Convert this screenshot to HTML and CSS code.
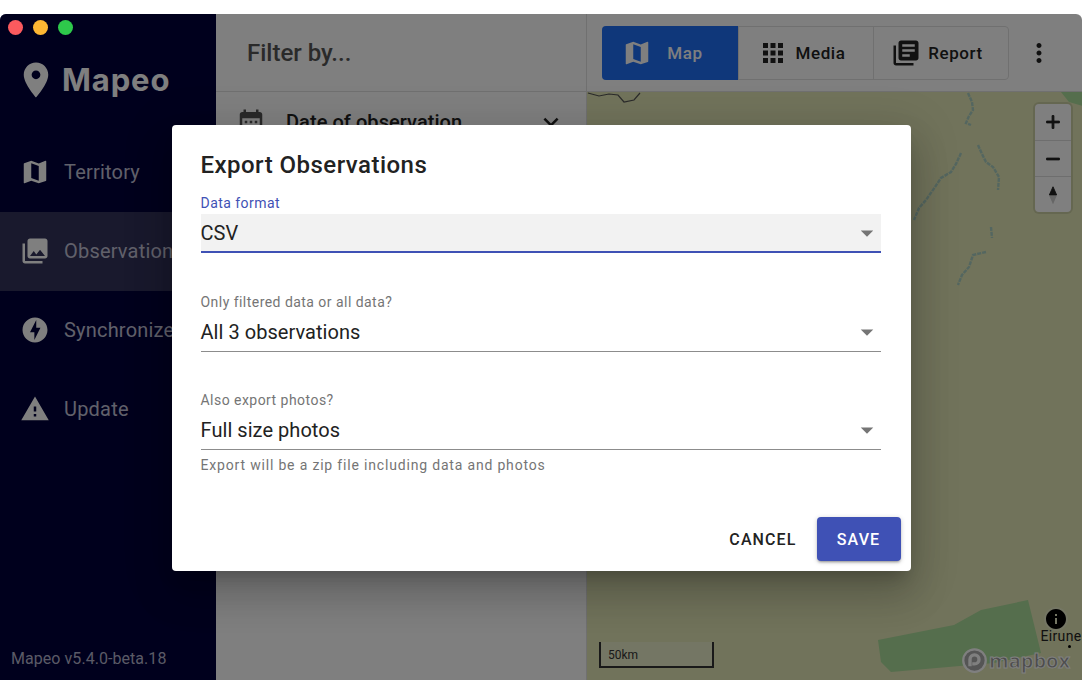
FILE: index.html
```html
<!DOCTYPE html>
<html lang="en">
<head>
    <meta charset="UTF-8">
    <meta name="viewport" content="width=device-width, initial-scale=1.0">
    <title>Mapeo - Export Observations</title>
    <link rel="stylesheet" href="styles.css">
</head>
<body>
    <div class="window">
        <div class="traffic-lights">
            <span class="light light-red"></span>
            <span class="light light-yellow"></span>
            <span class="light light-green"></span>
        </div>

        <aside class="sidebar">
            <div class="logo">
                <svg class="logo-pin" viewBox="0 0 24 24"><path d="M12 2C8.13 2 5 5.13 5 9c0 5.25 7 13 7 13s7-7.75 7-13c0-3.87-3.13-7-7-7zm0 9.5c-1.38 0-2.5-1.12-2.5-2.5s1.12-2.5 2.5-2.5 2.5 1.12 2.5 2.5-1.12 2.5-2.5 2.5z"/></svg>
                <span class="logo-text">Mapeo</span>
            </div>
            <nav class="nav">
                <div class="nav-item">
                    <svg class="icon" viewBox="0 0 24 24"><path d="M20.5 3l-.16.03L15 5.1 9 3 3.36 4.9c-.21.07-.36.25-.36.48V20.5c0 .28.22.5.5.5l.16-.03L9 18.9l6 2.1 5.64-1.9c.21-.07.36-.25.36-.48V3.5c0-.28-.22-.5-.5-.5zM15 19l-6-2.11V5l6 2.11V19z"/></svg>
                    <span>Territory</span>
                </div>
                <div class="nav-item nav-item-active">
                    <svg class="icon" viewBox="0 0 24 24"><path d="M22 16V4c0-1.1-.9-2-2-2H8c-1.1 0-2 .9-2 2v12c0 1.1.9 2 2 2h12c1.1 0 2-.9 2-2zm-11-4l2.03 2.71L16 11l4 5H8l3-4zM2 6v14c0 1.1.9 2 2 2h14v-2H4V6H2z"/></svg>
                    <span>Observations</span>
                </div>
                <div class="nav-item">
                    <svg class="icon" viewBox="0 0 24 24"><path d="M12 2.02c-5.51 0-9.98 4.47-9.98 9.98s4.47 9.98 9.98 9.98 9.98-4.47 9.98-9.98S17.51 2.02 12 2.02zM11.48 20v-6.26H8L13 4v6.26h3.35L11.48 20z"/></svg>
                    <span>Synchronize</span>
                </div>
                <div class="nav-item">
                    <svg class="icon" viewBox="0 0 24 24"><path d="M1 21h22L12 2 1 21zm12-3h-2v-2h2v2zm0-4h-2v-4h2v4z"/></svg>
                    <span>Update</span>
                </div>
            </nav>
            <div class="version">Mapeo v5.4.0-beta.18</div>
        </aside>

        <section class="filters">
            <header class="filters-header">Filter by...</header>
            <div class="filter-row">
                <svg class="icon filter-icon" viewBox="0 0 24 24"><path d="M9 11H7v2h2v-2zm4 0h-2v2h2v-2zm4 0h-2v2h2v-2zm2-7h-1V2h-2v2H8V2H6v2H5c-1.11 0-1.99.9-1.99 2L3 20c0 1.1.89 2 2 2h14c1.1 0 2-.9 2-2V6c0-1.1-.9-2-2-2zm0 16H5V9h14v11z"/></svg>
                <span class="filter-name">Date of observation</span>
                <svg class="icon filter-chevron" viewBox="0 0 24 24"><path d="M16.59 8.59L12 13.17 7.41 8.59 6 10l6 6 6-6z"/></svg>
            </div>
        </section>

        <main class="content">
            <div class="toolbar">
                <div class="toggle-group">
                    <div class="toggle toggle-active">
                        <svg class="icon" viewBox="0 0 24 24"><path d="M20.5 3l-.16.03L15 5.1 9 3 3.36 4.9c-.21.07-.36.25-.36.48V20.5c0 .28.22.5.5.5l.16-.03L9 18.9l6 2.1 5.64-1.9c.21-.07.36-.25.36-.48V3.5c0-.28-.22-.5-.5-.5zM15 19l-6-2.11V5l6 2.11V19z"/></svg>
                        <span>Map</span>
                    </div>
                    <div class="toggle">
                        <svg class="icon" viewBox="0 0 24 24"><path d="M4 8h4V4H4v4zm6 12h4v-4h-4v4zm-6 0h4v-4H4v4zm0-6h4v-4H4v4zm6 0h4v-4h-4v4zm6-10v4h4V4h-4zm-6 4h4V4h-4v4zm6 6h4v-4h-4v4zm0 6h4v-4h-4v4z"/></svg>
                        <span>Media</span>
                    </div>
                    <div class="toggle">
                        <svg class="icon" viewBox="0 0 24 24"><path d="M4 6H2v14c0 1.1.9 2 2 2h14v-2H4V6zm16-4H8c-1.1 0-2 .9-2 2v12c0 1.1.9 2 2 2h12c1.1 0 2-.9 2-2V4c0-1.1-.9-2-2-2zm-1 9H9V9h10v2zm-4 4H9v-2h6v2zm4-8H9V5h10v2z"/></svg>
                        <span>Report</span>
                    </div>
                </div>
                <svg class="icon more-icon" viewBox="0 0 24 24"><path d="M12 8c1.1 0 2-.9 2-2s-.9-2-2-2-2 .9-2 2 .9 2 2 2zm0 2c-1.1 0-2 .9-2 2s.9 2 2 2 2-.9 2-2-.9-2-2-2zm0 6c-1.1 0-2 .9-2 2s.9 2 2 2 2-.9 2-2-.9-2-2-2z"/></svg>
            </div>

            <div class="map">
                <!-- map features, coordinates are relative to the map's top left corner -->
                <svg class="map-features" viewBox="0 0 496 588">
                    <polygon class="map-park" points="291,548 367,533 394,518 441,508 454,561 407,571 304,580 294,570"/>
                    <polygon class="map-park" points="474,0 496,0 496,14 482,10"/>
                    <polyline class="map-road" points="1,1 12,4 22,2 31,3 37,10 47,8 53,1"/>
                    <polyline class="map-river" points="381,1 385,10 386,18 382,24 379,31 384,33"/>
                    <polyline class="map-river" points="391,53 395,62 399,70 406,75 412,85 411,98"/>
                    <polyline class="map-river" points="374,61 369,72 364,80 354,86 348,95 339,108 332,116 327,128"/>
                    <polyline class="map-river" points="404,135 405,146"/>
                    <polyline class="map-river" points="399,160 386,163 382,175 375,183 371,193"/>
                </svg>

                <div class="map-controls">
                    <div class="map-control">
                        <svg viewBox="0 0 24 24"><path d="M19 13h-6v6h-2v-6H5v-2h6V5h2v6h6v2z"/></svg>
                    </div>
                    <div class="map-control">
                        <svg viewBox="0 0 24 24"><path d="M19 13H5v-2h14v2z"/></svg>
                    </div>
                    <div class="map-control">
                        <svg viewBox="0 0 24 24"><path d="M12 3l4 9H8z"/><path class="compass-south" d="M12 22l-4-9h8z"/></svg>
                    </div>
                </div>

                <div class="map-scale">50km</div>

                <div class="map-place">
                    <svg class="map-info" viewBox="0 0 24 24"><path d="M12 2C6.48 2 2 6.48 2 12s4.48 10 10 10 10-4.48 10-10S17.52 2 12 2zm1 15h-2v-6h2v6zm0-8h-2V7h2v2z"/></svg>
                    <span class="map-place-name">Eirune</span>
                    <span class="map-place-dot"></span>
                </div>

                <div class="mapbox-logo">
                    <svg viewBox="0 0 24 24"><circle cx="12" cy="12" r="10"/><path class="mapbox-p" d="M8 17V11a4 4 0 1 1 4 4H10"/></svg>
                    <span>mapbox</span>
                </div>
            </div>
        </main>

        <div class="overlay">
            <div class="dialog">
                <h2 class="dialog-title">Export Observations</h2>

                <div class="field">
                    <label class="field-label field-label-focus">Data format</label>
                    <div class="select select-focus">
                        <span>CSV</span>
                        <svg class="select-arrow" viewBox="0 0 24 24"><path d="M7 10l5 5 5-5z"/></svg>
                    </div>
                </div>

                <div class="field">
                    <label class="field-label">Only filtered data or all data?</label>
                    <div class="select">
                        <span>All 3 observations</span>
                        <svg class="select-arrow" viewBox="0 0 24 24"><path d="M7 10l5 5 5-5z"/></svg>
                    </div>
                </div>

                <div class="field">
                    <label class="field-label">Also export photos?</label>
                    <div class="select">
                        <span>Full size photos</span>
                        <svg class="select-arrow" viewBox="0 0 24 24"><path d="M7 10l5 5 5-5z"/></svg>
                    </div>
                    <p class="field-help">Export will be a zip file including data and photos</p>
                </div>

                <div class="dialog-actions">
                    <button type="button" class="btn">CANCEL</button>
                    <button type="button" class="btn btn-primary">SAVE</button>
                </div>
            </div>
        </div>
    </div>
</body>
</html>
```

FILE: styles.css
```css
* {
    box-sizing: border-box;
}
html, body {
    height: 100%;
}
body {
    margin: 0;
    background-color: #fff;
    font-family: Roboto, "Liberation Sans", sans-serif;
    color: #222;
    overflow: hidden;
}
.icon {
    width: 30px;
    height: 30px;
    flex: none;
    fill: currentColor;
}

/* app window */
.window {
    position: relative;
    display: flex;
    width: 1082px;
    height: 666px;
    margin-top: 14px;
    border-radius: 6px 6px 0 0;
    overflow: hidden;
}
.traffic-lights {
    position: absolute;
    top: 6px;
    left: 8px;
    z-index: 20;
    display: flex;
    gap: 10px;
}
.light {
    width: 15px;
    height: 15px;
    border-radius: 50%;
}
.light-red {
    background-color: #fb5a5e;
}
.light-yellow {
    background-color: #fdb733;
}
.light-green {
    background-color: #2ec94b;
}

/* sidebar */
.sidebar {
    display: flex;
    flex-direction: column;
    width: 216px;
    flex: none;
    background-color: #00003a;
    color: #fff;
}
.logo {
    display: flex;
    align-items: center;
    gap: 5px;
    height: 119px;
    padding: 13px 0 0 15px;
}
.logo-pin {
    width: 42px;
    height: 42px;
    fill: #fff;
}
.logo-text {
    margin-top: -2px;
    font-family: Inter, sans-serif;
    font-size: 31px;
    font-weight: 700;
    letter-spacing: 0.9px;
}
.nav {
    flex: 1;
}
.nav-item {
    display: flex;
    align-items: center;
    gap: 14px;
    height: 79px;
    padding: 0 0 2px 20px;
    font-size: 20px;
    letter-spacing: 0.2px;
    white-space: nowrap;
    color: #c2c2d6;
}
.nav-item .icon {
    color: #fff;
}
.nav-item-active {
    background-color: #33335a;
}
.version {
    padding: 0 0 12px 11px;
    font-size: 16px;
    letter-spacing: 0.05px;
    color: #b4b4cc;
}

/* filter column */
.filters {
    width: 370px;
    flex: none;
    background-color: #fff;
}
.filters-header {
    display: flex;
    align-items: center;
    height: 78px;
    padding-left: 31px;
    border-bottom: 1px solid #e0e0e0;
    font-size: 24px;
    font-weight: 500;
    color: #555;
}
.filter-row {
    display: flex;
    align-items: center;
    height: 60px;
    padding-left: 20px;
    color: #555;
}
.filter-name {
    margin-left: 20px;
    font-size: 20px;
    font-weight: 500;
    letter-spacing: 0.05px;
    color: #222;
}
.filter-chevron {
    margin-left: auto;
    margin-right: 20px;
    color: #222;
}

/* toolbar and map */
.content {
    display: flex;
    flex-direction: column;
    flex: 1;
    min-width: 0;
    border-left: 1px solid #e0e0e0;
}
.toolbar {
    display: flex;
    align-items: center;
    height: 78px;
    padding: 0 0 0 15px;
    background-color: #fff;
    border-bottom: 1px solid #e0e0e0;
}
.toggle-group {
    display: flex;
    width: 407px;
    height: 54px;
    border: 1px solid #e0e0e0;
    border-radius: 4px;
}
.toggle {
    display: flex;
    flex: 1;
    align-items: center;
    justify-content: center;
    gap: 7px;
    padding-right: 8px;
    border-left: 1px solid #e0e0e0;
    font-size: 17px;
    font-weight: 500;
    letter-spacing: 0.6px;
    color: #222;
}
.toggle:first-child {
    border-left: 0;
}
.toggle-active {
    flex: none;
    width: 136px;
    gap: 15px;
    padding-right: 15px;
    margin: -1px 0 -1px -1px;
    background-color: #1f6ff5;
    border-radius: 4px 0 0 4px;
    color: #fff;
}
.more-icon {
    margin-left: 15px;
    color: #222;
}
.map {
    position: relative;
    flex: 1;
    background-color: #e2e6b6;
}
.map-features {
    position: absolute;
    top: 0;
    left: 0;
    width: 496px;
    height: 588px;
}
.map-park {
    fill: #aadc9a;
}
.map-road {
    fill: none;
    stroke: #555;
    stroke-width: 1.2;
}
.map-river {
    fill: none;
    stroke: #a8cdc0;
    stroke-width: 2.4;
    stroke-dasharray: 4 1;
}
.map-controls {
    position: absolute;
    top: 12px;
    right: 11px;
    width: 36px;
    background-color: #fff;
    border-radius: 4px;
    box-shadow: 0 0 0 2px rgba(0, 0, 0, 0.1);
}
.map-control {
    display: flex;
    align-items: center;
    justify-content: center;
    height: 36px;
    border-top: 1px solid #ddd;
}
.map-control:first-child {
    border-top: 0;
}
.map-control svg {
    width: 22px;
    height: 22px;
    fill: #222;
    stroke: #222;
    stroke-width: 1;
}
.map-control .compass-south {
    fill: #ccc;
    stroke: none;
}
.map-scale {
    position: absolute;
    left: 12px;
    bottom: 12px;
    width: 115px;
    height: 26px;
    padding: 6px 0 0 7px;
    border: 2px solid #333;
    border-top: 0;
    background-color: rgba(255, 255, 255, 0.25);
    font-size: 12px;
    color: #333;
}
.map-place {
    position: absolute;
    top: 515px;
    right: 0;
    width: 42px;
    display: flex;
    flex-direction: column;
    align-items: center;
}
.map-info {
    width: 24px;
    height: 24px;
    margin-right: 10px;
    border-radius: 50%;
    background-color: rgba(255, 255, 255, 0.25);
    fill: #000;
}
.map-place-name {
    margin-top: -3px;
    font-size: 14px;
    line-height: 16px;
    letter-spacing: 0.3px;
    color: #222;
}
.map-place-dot {
    width: 3px;
    height: 3px;
    margin: 1px 0 0 16px;
    border-radius: 50%;
    background-color: #000;
}
.mapbox-logo {
    position: absolute;
    right: 12px;
    bottom: 6px;
    display: flex;
    align-items: center;
    gap: 1px;
    color: #999;
}
.mapbox-logo svg {
    width: 27px;
    height: 27px;
    fill: #aaa;
    stroke: #fff;
    stroke-width: 2;
}
.mapbox-logo .mapbox-p {
    fill: none;
    stroke: #fff;
    stroke-width: 3;
}
.mapbox-logo span {
    font-family: "Open Sans", sans-serif;
    font-size: 20px;
    font-weight: 700;
    line-height: 24px;
    -webkit-text-stroke: 1px #fff;
}

/* export dialog */
.overlay {
    position: absolute;
    top: 0;
    left: 0;
    right: 0;
    bottom: 0;
    z-index: 10;
    display: flex;
    align-items: center;
    justify-content: center;
    padding-top: 2px;
    background-color: rgba(0, 0, 0, 0.5);
}
.dialog {
    width: 739px;
    height: 446px;
    padding: 24px 30px 10px 29px;
    display: flex;
    flex-direction: column;
    background-color: #fff;
    border-radius: 4px;
    box-shadow: 0 11px 15px -7px rgba(0, 0, 0, 0.2), 0 24px 38px 3px rgba(0, 0, 0, 0.14), 0 9px 46px 8px rgba(0, 0, 0, 0.12);
}
.dialog-title {
    margin: 0 0 12px;
    font-size: 24px;
    font-weight: 500;
    letter-spacing: 0.47px;
    line-height: 32px;
    color: #222;
}
.field {
    margin-bottom: 38px;
}
.field:first-of-type {
    margin-bottom: 39px;
}
.field-label {
    display: block;
    height: 21px;
    font-size: 14px;
    line-height: 20px;
    letter-spacing: 0.46px;
    color: #757575;
}
.field-label-focus {
    color: #3f51b5;
}
.select {
    display: flex;
    align-items: center;
    justify-content: space-between;
    height: 39px;
    border-bottom: 1px solid #8c8c8c;
    font-size: 20px;
    letter-spacing: 0.05px;
    color: #222;
}
.select-focus {
    background-color: #f2f2f2;
    border-bottom: 2px solid #3f51b5;
}
.select-arrow {
    width: 30px;
    height: 30px;
    margin-right: -1px;
    fill: #757575;
}
.field-help {
    margin: 7px 0 0;
    font-size: 14px;
    line-height: 16px;
    letter-spacing: 0.82px;
    color: #757575;
}
.dialog-actions {
    display: flex;
    justify-content: flex-end;
    align-items: center;
    gap: 20px;
    margin-top: auto;
    margin-right: -20px;
}
.btn {
    height: 44px;
    padding: 0;
    border: 0;
    border-radius: 4px;
    background: none;
    font-family: Roboto, sans-serif;
    font-size: 16px;
    font-weight: 500;
    letter-spacing: 1.1px;
    color: #222;
}
.btn-primary {
    width: 84px;
    background-color: #3f51b5;
    color: #fff;
    box-shadow: 0 1px 5px rgba(0, 0, 0, 0.2), 0 2px 2px rgba(0, 0, 0, 0.14), 0 3px 1px -2px rgba(0, 0, 0, 0.12);
}
```
